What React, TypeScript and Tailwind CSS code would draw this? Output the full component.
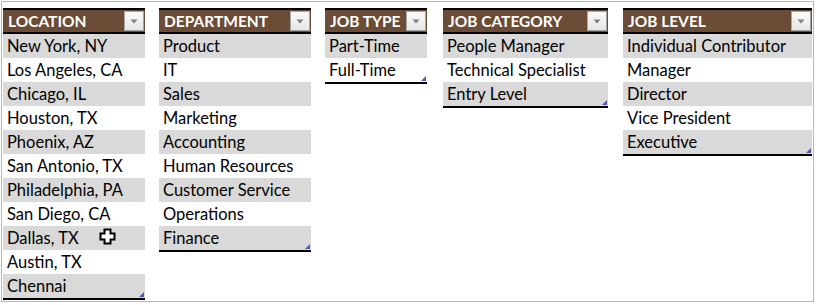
import React from 'react';

type Slicer = {
  title: string;
  width: string;
  gap: string;
  items: string[];
};

const slicers: Slicer[] = [
  {
    title: 'LOCATION',
    width: 'w-[142px]',
    gap: 'ml-0',
    items: [
      'New York, NY',
      'Los Angeles, CA',
      'Chicago, IL',
      'Houston, TX',
      'Phoenix, AZ',
      'San Antonio, TX',
      'Philadelphia, PA',
      'San Diego, CA',
      'Dallas, TX',
      'Austin, TX',
      'Chennai',
    ],
  },
  {
    title: 'DEPARTMENT',
    width: 'w-[152px]',
    gap: 'ml-[14px]',
    items: [
      'Product',
      'IT',
      'Sales',
      'Marketing',
      'Accounting',
      'Human Resources',
      'Customer Service',
      'Operations',
      'Finance',
    ],
  },
  {
    title: 'JOB TYPE',
    width: 'w-[102px]',
    gap: 'ml-[14px]',
    items: ['Part-Time', 'Full-Time'],
  },
  {
    title: 'JOB CATEGORY',
    width: 'w-[165px]',
    gap: 'ml-[16px]',
    items: ['People Manager', 'Technical Specialist', 'Entry Level'],
  },
  {
    title: 'JOB LEVEL',
    width: 'w-[189px]',
    gap: 'ml-[15px]',
    items: ['Individual Contributor', 'Manager', 'Director', 'Vice President', 'Executive'],
  },
];

const FilterButton = () => (
  <div className="absolute right-[1px] top-[1px] flex h-[20px] w-[20px] items-center justify-center border border-[#a6a6a6] bg-gradient-to-b from-[#fbfbfb] to-[#e6e6e6]">
    <svg width="8" height="5" viewBox="0 0 8 5">
      <path d="M0.5 0.5 L7.5 0.5 L4 4.5 Z" fill="#7f7f7f" />
    </svg>
  </div>
);

const SlicerList = ({ slicer }: { slicer: Slicer }) => (
  <div className={`${slicer.width} ${slicer.gap} shrink-0`}>
    <div className="relative h-[26px] border-y-2 border-black bg-[#6b4c36] pl-[5px] text-[15.5px] font-bold leading-[23px] text-white">
      {slicer.title}
      <FilterButton />
    </div>
    <div className="relative border-b-2 border-black">
      {slicer.items.map((item, i) => (
        <div
          key={item}
          className={`h-[24px] pl-[4px] text-[16.5px] leading-[25px] text-black ${
            i % 2 === 0 ? 'bg-[#d9d9d9]' : 'bg-white'
          }`}
        >
          {item}
        </div>
      ))}
      {/* resize grip */}
      <svg className="absolute bottom-[1px] right-[1px]" width="5" height="5" viewBox="0 0 5 5">
        <path d="M5 0 L5 5 L0 5 Z" fill="#4a5ab5" />
      </svg>
    </div>
  </div>
);

export default function App() {
  return (
    <div className="relative h-[305px] w-[819px] bg-white font-['Lato','Liberation_Sans',sans-serif]">
      <div className="absolute left-[1px] top-[1px] h-[301px] w-[813px] border border-[#f5b52a]">
        <div className="flex items-start pl-[1px] pt-[6px]">
          {slicers.map((s) => (
            <SlicerList key={s.title} slicer={s} />
          ))}
        </div>
      </div>
      {/* cell cursor */}
      <svg className="absolute left-[99px] top-[228px]" width="17" height="17" viewBox="0 0 17 17">
        <path
          d="M5.5 1.5 H11.5 V5.5 H15.5 V11.5 H11.5 V15.5 H5.5 V11.5 H1.5 V5.5 H5.5 Z"
          fill="white"
          stroke="black"
          strokeWidth="2"
        />
      </svg>
    </div>
  );
}
